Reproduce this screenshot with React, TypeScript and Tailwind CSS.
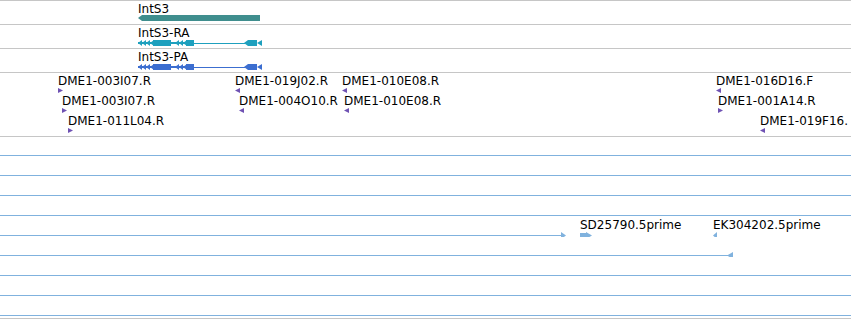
import React from "react";

const GRAY = "border-[#c6c6c6]";
const PURPLE = "#6f52b3";
const EST = "#80b2de";

function Label({ x, text }: { x: number; text: string }) {
  return (
    <div
      className="absolute top-[1px] whitespace-nowrap text-[12px] leading-[14px] text-black"
      style={{ left: x }}
    >
      {text}
    </div>
  );
}

function Tri({ x, y, dir, color, w = 5, h = 5 }: { x: number; y: number; dir: "l" | "r"; color: string; w?: number; h?: number }) {
  const pts =
    dir === "r"
      ? `${x},${y} ${x + w},${y + h / 2} ${x},${y + h}`
      : `${x + w},${y} ${x},${y + h / 2} ${x + w},${y + h}`;
  return <polygon points={pts} fill={color} />;
}

function Transcript({ color }: { color: string }) {
  const t = 15;
  return (
    <svg className="absolute left-0 top-0" width={851} height={23}>
      <rect x={138} y={17} width={34} height={2} fill={color} />
      {[138, 142, 146, 150].map((x) => (
        <Tri key={x} x={x} y={t} dir="l" color={color} w={4} h={6} />
      ))}
      <rect x={153} y={t} width={18} height={6} fill={color} />
      <rect x={171} y={17} width={23} height={2} fill={color} />
      {[175, 179, 183].map((x) => (
        <Tri key={x} x={x} y={t} dir="l" color={color} w={4} h={6} />
      ))}
      <rect x={186} y={t} width={8} height={6} fill={color} />
      <rect x={194} y={18} width={51} height={1} fill={color} />
      <Tri x={244} y={t} dir="l" color={color} w={4} h={6} />
      <rect x={248} y={t} width={9} height={6} fill={color} />
      <Tri x={257} y={t} dir="l" color={color} w={5} h={6} />
    </svg>
  );
}

type Dme = { x: number; text: string; dir: "l" | "r" };

const dmeRows: Dme[][] = [
  [
    { x: 58, text: "DME1-003I07.R", dir: "r" },
    { x: 235, text: "DME1-019J02.R", dir: "l" },
    { x: 342, text: "DME1-010E08.R", dir: "l" },
    { x: 716, text: "DME1-016D16.F", dir: "l" },
  ],
  [
    { x: 62, text: "DME1-003I07.R", dir: "r" },
    { x: 239, text: "DME1-004O10.R", dir: "l" },
    { x: 344, text: "DME1-010E08.R", dir: "l" },
    { x: 718, text: "DME1-001A14.R", dir: "r" },
  ],
  [
    { x: 68, text: "DME1-011L04.R", dir: "r" },
    { x: 760, text: "DME1-019F16.", dir: "l" },
  ],
];

export default function App() {
  return (
    <div
      className="relative h-[320px] w-[851px] overflow-hidden bg-white"
      style={{ fontFamily: '"DejaVu Sans", sans-serif' }}
    >
      {/* Gene */}
      <div className={`relative h-[24px] border-t ${GRAY}`}>
        <Label x={138} text="IntS3" />
        <svg className="absolute left-0 top-0" width={851} height={23}>
          <polygon points="138,17 142,14 260,14 260,20 142,20" fill="#3f8e8e" />
        </svg>
      </div>
      <div className={`relative h-[24px] border-t ${GRAY}`}>
        <Label x={138} text="IntS3-RA" />
        <Transcript color="#1ea0be" />
      </div>
      <div className={`relative h-[24px] border-t ${GRAY}`}>
        <Label x={138} text="IntS3-PA" />
        <Transcript color="#3c6ed0" />
      </div>

      {/* DME track */}
      <div className={`flex h-[64px] flex-col border-t ${GRAY}`}>
        {dmeRows.map((row, i) => (
          <div key={i} className="relative h-[20px] shrink-0">
            {row.map((d) => (
              <Label key={d.x} x={d.x} text={d.text} />
            ))}
            <svg className="absolute left-0 top-0" width={851} height={20}>
              {row.map((d) => (
                <Tri key={d.x} x={d.x} y={15} dir={d.dir} color={PURPLE} w={5} h={5} />
              ))}
            </svg>
          </div>
        ))}
      </div>

      {/* EST track */}
      <div className={`flex h-[182px] flex-col border-t ${GRAY}`}>
        {Array.from({ length: 9 }).map((_, i) => (
          <div key={i} className="relative h-[20px] shrink-0">
            {i === 4 && (
              <>
                <Label x={580} text="SD25790.5prime" />
                <Label x={713} text="EK304202.5prime" />
              </>
            )}
            <svg className="absolute left-0 top-0" width={851} height={20}>
              {i === 4 ? (
                <>
                  <rect x={0} y={18} width={562} height={1} fill={EST} />
                  <Tri x={561} y={15} dir="r" color={EST} w={5} h={7} />
                  <rect x={580} y={16} width={7} height={5} fill={EST} />
                  <Tri x={586} y={15} dir="r" color={EST} w={6} h={7} />
                  <Tri x={713} y={15} dir="l" color={EST} w={4} h={7} />
                </>
              ) : i === 5 ? (
                <>
                  <rect x={0} y={18} width={730} height={1} fill={EST} />
                  <Tri x={727} y={15} dir="l" color={EST} w={6} h={7} />
                </>
              ) : (
                <rect x={0} y={18} width={851} height={1} fill={EST} />
              )}
            </svg>
          </div>
        ))}
      </div>
      <div className={`border-t ${GRAY}`} />
    </div>
  );
}
